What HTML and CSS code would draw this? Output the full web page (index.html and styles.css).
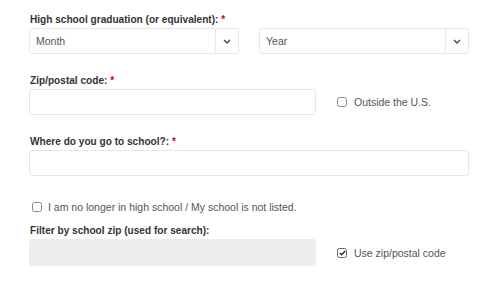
FILE: index.html
```html
<!DOCTYPE html>
<html lang="en">
<head>
    <meta charset="UTF-8" />
    <title>School info</title>
    <link rel="stylesheet" href="styles.css">
</head>
<body>
    <form class="form">
        <div class="field">
            <div class="label">High school graduation (or equivalent): <span class="req">*</span></div>
            <div class="row">
                <div class="select">
                    <span class="select-text">Month</span>
                    <span class="select-arrow">
                        <svg width="8" height="5" viewBox="0 0 8 5"><path d="M1 1l3 3 3-3" fill="none" stroke="#444" stroke-width="1.3"/></svg>
                    </span>
                </div>
                <div class="select">
                    <span class="select-text">Year</span>
                    <span class="select-arrow">
                        <svg width="8" height="5" viewBox="0 0 8 5"><path d="M1 1l3 3 3-3" fill="none" stroke="#444" stroke-width="1.3"/></svg>
                    </span>
                </div>
            </div>
        </div>

        <div class="field">
            <div class="label">Zip/postal code: <span class="req">*</span></div>
            <div class="row">
                <div class="input input-short"></div>
                <label class="check"><span class="box"></span>Outside the U.S.</label>
            </div>
        </div>

        <div class="field">
            <div class="label">Where do you go to school?: <span class="req">*</span></div>
            <div class="input"></div>
        </div>

        <label class="check check-line"><span class="box"></span>I am no longer in high school / My school is not listed.</label>

        <div class="field field-last">
            <div class="label">Filter by school zip (used for search):</div>
            <div class="row">
                <div class="input input-short input-disabled"></div>
                <label class="check"><span class="box checked">
                    <svg width="7" height="6" viewBox="0 0 7 6"><path d="M0.8 3l1.8 1.8L6.2 1" fill="none" stroke="#222" stroke-width="1.4"/></svg>
                </span>Use zip/postal code</label>
            </div>
        </div>
    </form>
</body>
</html>
```

FILE: styles.css
```css
body {
    margin: 0;
    background: #fff;
    font-family: "Liberation Sans", Arial, sans-serif;
    color: #333;
}

.form {
    width: 440px;
    padding: 14px 0 0 29px;
}

.field {
    margin-bottom: 21px;
}

.label {
    font-size: 10.1px;
    font-weight: bold;
    line-height: 12px;
    color: #333;
    margin-bottom: 2px;
    padding-left: 1px;
}

.req {
    color: #d0021b;
}

.row {
    display: flex;
    align-items: center;
    gap: 20px;
}

.select {
    flex: 1;
    height: 24px;
    border: 1px solid #e8e8e8;
    border-radius: 3px;
    display: flex;
    align-items: center;
}

.select-text {
    flex: 1;
    padding-left: 6px;
    font-size: 10.5px;
    color: #555;
}

.select-arrow {
    width: 22px;
    height: 100%;
    border-left: 1px solid #e8e8e8;
    display: flex;
    align-items: center;
    justify-content: center;
}

.input {
    height: 24px;
    border: 1px solid #e6e6e6;
    border-radius: 3px;
}

.input-short {
    width: 285px;
}

.input-disabled {
    background: #eeeeee;
    border-color: #ececec;
    height: 25px;
}

.check {
    display: flex;
    align-items: center;
    font-size: 10.5px;
    color: #555;
}

.row .check {
    margin-left: 1px;
}

.box {
    width: 8px;
    height: 8px;
    border: 1px solid #888;
    border-radius: 2.5px;
    margin-right: 7px;
    display: flex;
    align-items: center;
    justify-content: center;
}

.box.checked {
    border-color: #666;
}

.check-line {
    margin: 25px 0 12px 3px;
    line-height: 12px;
}

.check-line .box {
    margin-right: 6px;
}
```
